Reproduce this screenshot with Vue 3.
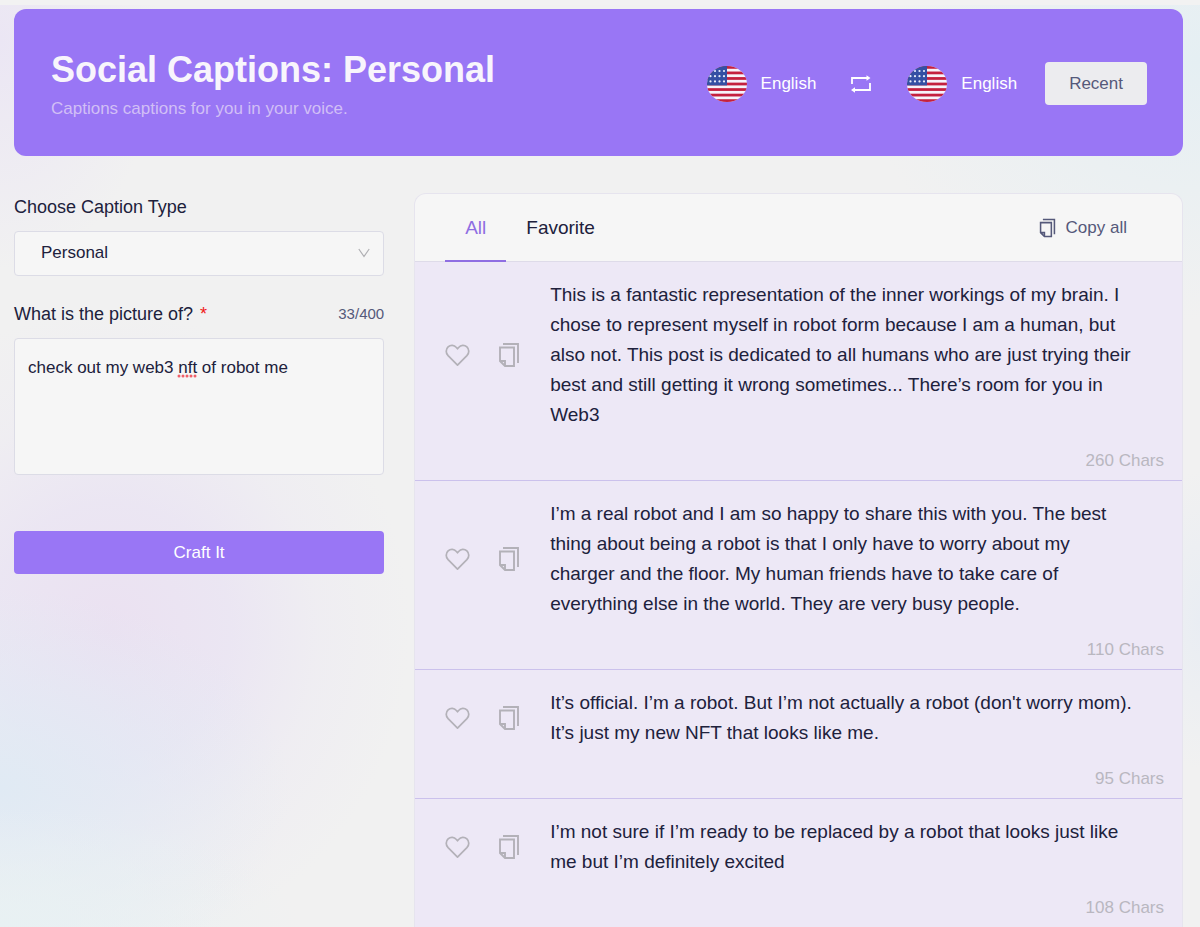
<script setup>
import { ref, computed } from 'vue'

const captionType = ref('Personal')
const description = ref('check out my web3 nft of robot me')
const maxLength = 400
const activeTab = ref('all')
const counter = computed(() => `${description.value.length}/${maxLength}`)

const captions = [
  {
    text: 'This is a fantastic representation of the inner workings of my brain. I chose to represent myself in robot form because I am a human, but also not. This post is dedicated to all humans who are just trying their best and still getting it wrong sometimes... There’s room for you in Web3',
    chars: 260,
  },
  {
    text: 'I’m a real robot and I am so happy to share this with you. The best thing about being a robot is that I only have to worry about my charger and the floor. My human friends have to take care of everything else in the world. They are very busy people.',
    chars: 110,
  },
  {
    text: "It’s official. I’m a robot. But I’m not actually a robot (don't worry mom). It’s just my new NFT that looks like me.",
    chars: 95,
  },
  {
    text: 'I’m not sure if I’m ready to be replaced by a robot that looks just like me but I’m definitely excited',
    chars: 108,
  },
]

const stripes = [0, 1, 2, 3, 4, 5, 6]
const stars = []
for (let row = 0; row < 3; row++) {
  for (let col = 0; col < 4; col++) stars.push({ x: 3.5 + col * 4.5, y: 5 + row * 5.2 })
}
</script>

<template>
  <div class="page">
    <header class="banner">
      <div class="heading">
        <h1>Social Captions: Personal</h1>
        <p>Captions captions for you in your voice.</p>
      </div>
      <div class="languages">
        <template v-for="side in ['from', 'to']" :key="side">
          <button class="language" type="button">
            <svg class="flag" viewBox="0 0 40 36" aria-hidden="true">
              <defs>
                <clipPath :id="'flag-' + side"><ellipse cx="20" cy="18" rx="20" ry="18" /></clipPath>
              </defs>
              <g :clip-path="`url(#flag-${side})`">
                <rect width="40" height="36" fill="#f6f3fa" />
                <rect v-for="s in stripes" :key="s" x="0" :y="s * 5.54" width="40" height="2.77" fill="#c4203f" />
                <rect width="20" height="19.4" fill="#3450a4" />
                <circle v-for="(star, i) in stars" :key="i" :cx="star.x" :cy="star.y" r="1.1" fill="#e6ecfa" />
              </g>
            </svg>
            <span>English</span>
          </button>
          <button v-if="side === 'from'" class="swap" type="button" aria-label="Swap languages">
            <svg viewBox="0 0 22 20" fill="none" stroke="#fff" stroke-width="1.8" aria-hidden="true">
              <path d="M2 10V4H18M20 9V16H4" />
              <path d="M16.500 1.200V6.800L20.500 4ZM5 13.200V18.800L1 16Z" fill="#fff" stroke="none" />
            </svg>
          </button>
        </template>
        <button class="recent" type="button">Recent</button>
      </div>
    </header>

    <main class="content">
      <form class="composer" @submit.prevent>
        <div class="label-row">
          <label for="caption-type">Choose Caption Type</label>
        </div>
        <div class="select-wrap">
          <select id="caption-type" v-model="captionType">
            <option>Personal</option>
          </select>
          <svg class="chevron" viewBox="0 0 12 10" fill="none" stroke="#b0b0b4" stroke-width="1.2" aria-hidden="true">
            <path d="M0.800 1L6 8.500L11.200 1" />
          </svg>
        </div>
        <div class="label-row second">
          <label for="picture">What is the picture of? <span class="required">*</span></label>
          <span class="counter">{{ counter }}</span>
        </div>
        <div class="textarea-wrap">
          <textarea id="picture" v-model="description" :maxlength="maxLength" spellcheck="false"></textarea>
          <svg class="spelling" viewBox="0 0 20 4" aria-hidden="true">
            <circle v-for="x in [2, 6, 10, 14, 18]" :key="x" :cx="x" cy="2" r="1.5" fill="#f0606a" />
          </svg>
        </div>
        <button class="craft" type="submit">Craft It</button>
      </form>

      <section class="results">
        <div class="toolbar">
          <nav class="tabs">
            <button type="button" :class="{ active: activeTab === 'all' }" @click="activeTab = 'all'">All</button>
            <button type="button" :class="{ active: activeTab === 'favorite' }" @click="activeTab = 'favorite'">Favorite</button>
          </nav>
          <button class="copy-all" type="button">
            <svg viewBox="0 0 22 26" fill="none" stroke="currentColor" stroke-width="2" aria-hidden="true">
              <path d="M5 2H20V21" />
              <path d="M2 6H16V24H7L2 19ZM2 19H7V24" />
            </svg>
            <span>Copy all</span>
          </button>
        </div>
        <article v-for="caption in captions" :key="caption.chars" class="caption">
          <div class="caption-body">
            <button class="icon heart" type="button" aria-label="Favorite">
              <svg viewBox="0 0 26 24" fill="none" stroke="currentColor" stroke-width="1.8" stroke-linejoin="round" aria-hidden="true">
                <path d="M13 22L3.200 12.200C0.600 9.400 0.600 5.400 3.200 3C5.800 0.700 9.600 1 11.600 3.400L13 5L14.400 3.400C16.400 1 20.200 0.700 22.800 3C25.400 5.400 25.400 9.400 22.800 12.200Z" />
              </svg>
            </button>
            <button class="icon copy" type="button" aria-label="Copy">
              <svg viewBox="0 0 22 26" fill="none" stroke="currentColor" stroke-width="1.9" aria-hidden="true">
                <path d="M5 2H20V21" />
                <path d="M2 5.500H16V24H7L2 19ZM2 19H7V24" />
              </svg>
            </button>
            <p>{{ caption.text }}</p>
          </div>
          <footer>{{ caption.chars }} Chars</footer>
        </article>
      </section>
    </main>
  </div>
</template>

<style>
body {
  margin: 0;
  background: #f1f1f1;
}
</style>

<style scoped>
* {
  box-sizing: border-box;
}

.page {
  height: 100vh;
  overflow: hidden;
  padding: 9px 17px 0 14px;
  font-family: "Liberation Sans", Arial, sans-serif;
  font-size: 17px;
  color: #20213c;
  background:
    linear-gradient(#f2f2f2, #f2f2f2) 0 0 / 100% 5px no-repeat,
    radial-gradient(ellipse 300px 120px at 0 100%, #e8f1f3 0%, rgba(232, 241, 243, 0) 100%),
    radial-gradient(ellipse 290px 200px at 0 85%, #e0eaf4 0%, rgba(224, 234, 244, 0) 100%),
    radial-gradient(ellipse 300px 320px at 110px 630px, #ebe1f1 0%, rgba(234, 228, 243, 0.85) 40%, rgba(236, 232, 243, 0.4) 70%, rgba(240, 238, 242, 0) 100%),
    radial-gradient(ellipse 160px 230px at 0 40px, #ebe6f4 0%, rgba(235, 230, 244, 0) 100%),
    radial-gradient(ellipse 340px 260px at 100% 60px, #e5eff3 0%, rgba(229, 239, 243, 0) 100%),
    radial-gradient(ellipse 60px 150px at 100% 620px, #e9edf3 0%, rgba(233, 237, 243, 0) 100%),
    #f1f1f1;
}

button {
  margin: 0;
  padding: 0;
  border: 0;
  background: none;
  font: inherit;
  color: inherit;
  cursor: pointer;
}

svg {
  display: block;
}

.banner {
  display: flex;
  justify-content: space-between;
  align-items: center;
  padding: 36px 36px 34px 37px;
  border-radius: 12px;
  background: #9976f5;
}

h1 {
  margin: 0;
  font-size: 36px;
  line-height: 50px;
  font-weight: 700;
  color: #f8f5fc;
}

.heading p {
  margin: 0;
  line-height: 27px;
  color: #d1bff6;
}

.languages {
  display: flex;
  align-items: center;
  color: #fff;
}

.language {
  display: flex;
  align-items: center;
  gap: 14px;
}

.flag {
  width: 40px;
  height: 36px;
}

.swap {
  margin: 0 35px 0 34px;
}

.swap svg {
  width: 22px;
  height: 20px;
}

.recent {
  height: 43px;
  margin-left: 28px;
  padding: 0 24px;
  border-radius: 4px;
  background: #ececef;
  color: #55597a;
}

.content {
  display: grid;
  grid-template-columns: minmax(0, 13fr) minmax(0, 27fr);
  align-items: start;
  gap: 30px;
  margin-top: 37px;
}

.composer {
  display: flex;
  flex-direction: column;
}

.label-row {
  display: flex;
  justify-content: space-between;
  align-items: center;
  margin-bottom: 10px;
  font-size: 18px;
  line-height: 28px;
}

.label-row.second {
  margin-top: 24px;
}

.required {
  margin-left: 2px;
  color: #f01818;
}

.counter {
  font-size: 15px;
  color: #55597a;
}

.select-wrap,
.textarea-wrap {
  position: relative;
}

select,
textarea {
  display: block;
  width: 100%;
  margin: 0;
  border: 1px solid #dcdce6;
  border-radius: 4px;
  outline: 0;
  background: #f6f6f6;
  font: inherit;
  color: inherit;
}

select {
  height: 45px;
  padding: 0 40px 2px 26px;
  appearance: none;
}

.chevron {
  position: absolute;
  top: 17px;
  right: 14px;
  width: 12px;
  height: 10px;
  pointer-events: none;
}

textarea {
  height: 137px;
  padding: 15px 13px;
  line-height: 28px;
  resize: none;
}

.spelling {
  position: absolute;
  top: 36px;
  left: 163px;
  width: 20px;
  height: 4px;
  pointer-events: none;
}

.craft {
  height: 43px;
  margin-top: 56px;
  border-radius: 4px;
  background: #9976f5;
  color: #fff;
}

.results {
  border: 1px solid #e6e4ee;
  border-bottom: 0;
  border-radius: 12px 12px 0 0;
  overflow: hidden;
  background: #f6f6f6;
}

.toolbar {
  display: flex;
  justify-content: space-between;
  padding: 0 55px 0 30px;
  box-shadow: inset 0 -1px #dedbe9;
}

.tabs {
  display: flex;
}

.tabs button {
  height: 68px;
  padding: 2px 20px 0;
  border-bottom: 2px solid transparent;
  font-size: 19px;
}

.tabs button.active {
  border-bottom-color: #8f6ee2;
  color: #8f6ee2;
}

.copy-all {
  display: flex;
  align-items: center;
  gap: 10px;
  color: #55597a;
}

.copy-all svg {
  width: 17px;
  height: 20px;
}

.caption {
  padding: 18px 18px 7px 30px;
  border-bottom: 1px solid #cbc1ec;
  background: #ede8f6;
}

.caption-body {
  display: flex;
  align-items: center;
  padding-right: 28px;
}

.icon {
  flex: none;
  color: #b3b1b8;
}

.heart svg {
  width: 25px;
  height: 23px;
}

.heart {
  margin-right: 28px;
}

.copy {
  margin-right: 30px;
}

.copy svg {
  width: 22px;
  height: 26px;
}

.caption p {
  margin: 0;
  font-size: 19px;
  line-height: 30px;
}

footer {
  margin-top: 19px;
  line-height: 24px;
  text-align: right;
  color: #b9b7c0;
}
</style>
